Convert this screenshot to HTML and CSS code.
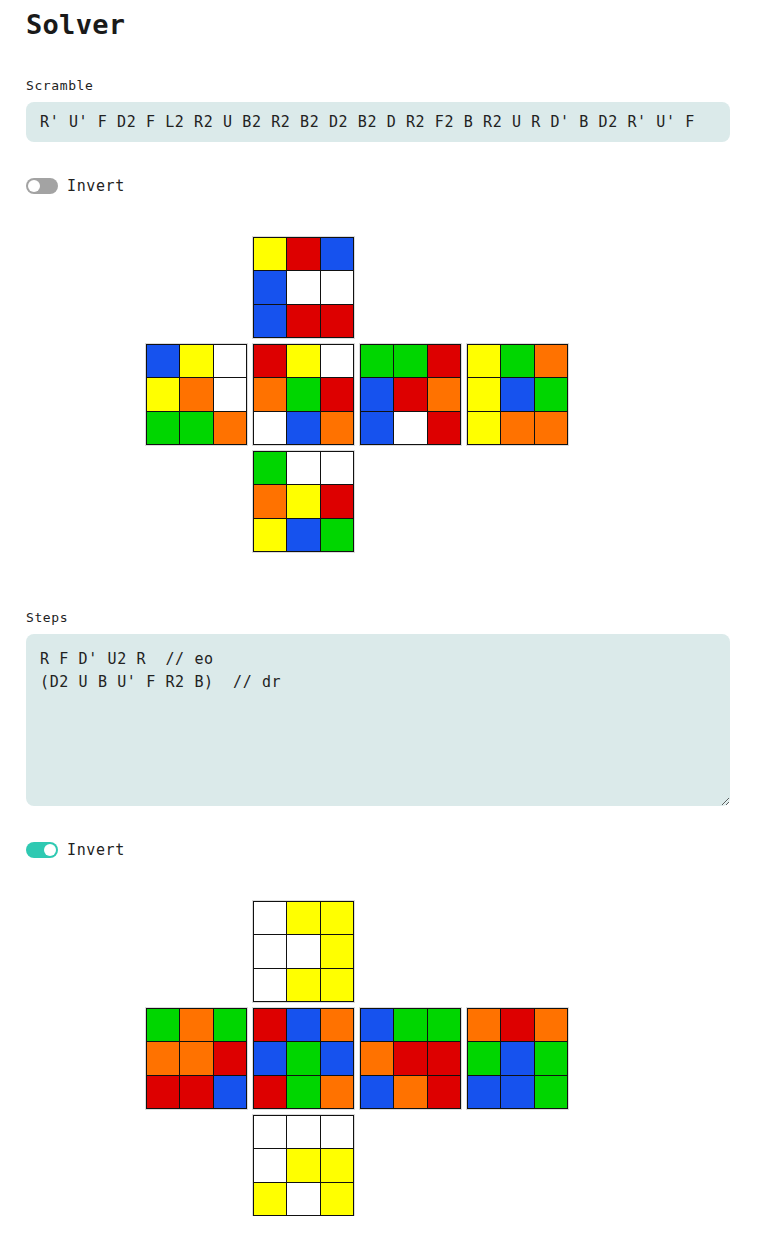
FILE: index.html
```html
<!DOCTYPE html>
<html lang="en">
<head>
<meta charset="utf-8">
<title>Solver</title>
<link rel="stylesheet" href="styles.css">
</head>
<body>
<main class="page">
  <h1 class="title">Solver</h1>

  <label class="field-label">Scramble</label>
  <div class="scramble">R' U' F D2 F L2 R2 U B2 R2 B2 D2 B2 D R2 F2 B R2 U R D' B D2 R' U' F</div>

  <div class="toggle-row">
    <span class="toggle"><span class="knob"></span></span>
    <span class="toggle-label">Invert</span>
  </div>

  <div class="net">
    <div class="face up">
      <i class="y"></i><i class="r"></i><i class="b"></i>
      <i class="b"></i><i class="w"></i><i class="w"></i>
      <i class="b"></i><i class="r"></i><i class="r"></i>
    </div>
    <div class="face left">
      <i class="b"></i><i class="y"></i><i class="w"></i>
      <i class="y"></i><i class="o"></i><i class="w"></i>
      <i class="g"></i><i class="g"></i><i class="o"></i>
    </div>
    <div class="face front">
      <i class="r"></i><i class="y"></i><i class="w"></i>
      <i class="o"></i><i class="g"></i><i class="r"></i>
      <i class="w"></i><i class="b"></i><i class="o"></i>
    </div>
    <div class="face right">
      <i class="g"></i><i class="g"></i><i class="r"></i>
      <i class="b"></i><i class="r"></i><i class="o"></i>
      <i class="b"></i><i class="w"></i><i class="r"></i>
    </div>
    <div class="face back">
      <i class="y"></i><i class="g"></i><i class="o"></i>
      <i class="y"></i><i class="b"></i><i class="g"></i>
      <i class="y"></i><i class="o"></i><i class="o"></i>
    </div>
    <div class="face down">
      <i class="g"></i><i class="w"></i><i class="w"></i>
      <i class="o"></i><i class="y"></i><i class="r"></i>
      <i class="y"></i><i class="b"></i><i class="g"></i>
    </div>
  </div>

  <label class="field-label steps-label">Steps</label>
  <textarea class="steps" spellcheck="false">R F D' U2 R  // eo
(D2 U B U' F R2 B)  // dr</textarea>

  <div class="toggle-row">
    <span class="toggle on"><span class="knob"></span></span>
    <span class="toggle-label">Invert</span>
  </div>

  <div class="net">
    <div class="face up">
      <i class="w"></i><i class="y"></i><i class="y"></i>
      <i class="w"></i><i class="w"></i><i class="y"></i>
      <i class="w"></i><i class="y"></i><i class="y"></i>
    </div>
    <div class="face left">
      <i class="g"></i><i class="o"></i><i class="g"></i>
      <i class="o"></i><i class="o"></i><i class="r"></i>
      <i class="r"></i><i class="r"></i><i class="b"></i>
    </div>
    <div class="face front">
      <i class="r"></i><i class="b"></i><i class="o"></i>
      <i class="b"></i><i class="g"></i><i class="b"></i>
      <i class="r"></i><i class="g"></i><i class="o"></i>
    </div>
    <div class="face right">
      <i class="b"></i><i class="g"></i><i class="g"></i>
      <i class="o"></i><i class="r"></i><i class="r"></i>
      <i class="b"></i><i class="o"></i><i class="r"></i>
    </div>
    <div class="face back">
      <i class="o"></i><i class="r"></i><i class="o"></i>
      <i class="g"></i><i class="b"></i><i class="g"></i>
      <i class="b"></i><i class="b"></i><i class="g"></i>
    </div>
    <div class="face down">
      <i class="w"></i><i class="w"></i><i class="w"></i>
      <i class="w"></i><i class="y"></i><i class="y"></i>
      <i class="y"></i><i class="w"></i><i class="y"></i>
    </div>
  </div>
</main>
</body>
</html>
```

FILE: styles.css
```css
html, body {
  margin: 0;
  padding: 0;
  background: #ffffff;
}

body {
  font-family: "DejaVu Sans Mono", "Liberation Mono", monospace;
  color: #1f1f1f;
}

.page {
  width: 704px;
  padding: 0 30px 0 26px;
  display: flex;
  flex-direction: column;
  align-items: flex-start;
}

.title {
  margin: 8px 0 0;
  font-size: 27px;
  line-height: 34px;
  font-weight: bold;
  letter-spacing: 0.3px;
  color: #1a1a1a;
}

.field-label {
  display: block;
  margin-top: 36px;
  font-size: 13px;
  line-height: 16px;
  letter-spacing: 0.6px;
  color: #222;
}

.steps-label {
  margin-top: 58px;
}

.scramble {
  margin-top: 8px;
  box-sizing: border-box;
  width: 704px;
  height: 40px;
  padding: 0 14px;
  display: flex;
  align-items: center;
  background: #dbeaea;
  border-radius: 8px;
  font-size: 15px;
  letter-spacing: 0.6px;
  color: #222;
  white-space: pre;
}

.toggle-row {
  margin-top: 36px;
  display: flex;
  align-items: center;
  gap: 9px;
  height: 16px;
}

.toggle {
  box-sizing: border-box;
  width: 32px;
  height: 16px;
  border-radius: 8px;
  background: #a3a3a3;
  padding: 2px;
  display: flex;
  justify-content: flex-start;
}

.toggle.on {
  background: #2fc9b2;
  justify-content: flex-end;
}

.knob {
  width: 12px;
  height: 12px;
  border-radius: 50%;
  background: #ffffff;
}

.toggle-label {
  font-size: 15px;
  line-height: 16px;
  letter-spacing: 0.62px;
  color: #222;
}

.net {
  margin-top: 43px;
  margin-left: 120px;
  display: grid;
  grid-template-columns: repeat(4, 101px);
  grid-template-rows: repeat(3, 101px);
  gap: 6px;
}

.face {
  box-sizing: border-box;
  display: grid;
  grid-template-columns: repeat(3, 1fr);
  grid-template-rows: repeat(3, 1fr);
  gap: 1px;
  padding: 1px;
  background: #111;
  box-shadow: 0 0 0 1px rgba(0, 0, 0, 0.14);
}

.face.up { grid-column: 2; grid-row: 1; }
.face.left { grid-column: 1; grid-row: 2; }
.face.front { grid-column: 2; grid-row: 2; }
.face.right { grid-column: 3; grid-row: 2; }
.face.back { grid-column: 4; grid-row: 2; }
.face.down { grid-column: 2; grid-row: 3; }

.face i { display: block; }
.face .w { background: #ffffff; }
.face .y { background: #ffff00; }
.face .r { background: #dd0000; }
.face .b { background: #1652ee; }
.face .g { background: #00d600; }
.face .o { background: #ff7200; }

.steps {
  display: block;
  margin: 8px 0 0;
  box-sizing: border-box;
  width: 704px;
  height: 172px;
  padding: 14px 14px;
  border: none;
  outline: none;
  border-radius: 8px;
  background: #dbeaea;
  font-family: "DejaVu Sans Mono", "Liberation Mono", monospace;
  font-size: 15px;
  line-height: 23px;
  letter-spacing: 0.62px;
  color: #222;
  resize: vertical;
}
```
